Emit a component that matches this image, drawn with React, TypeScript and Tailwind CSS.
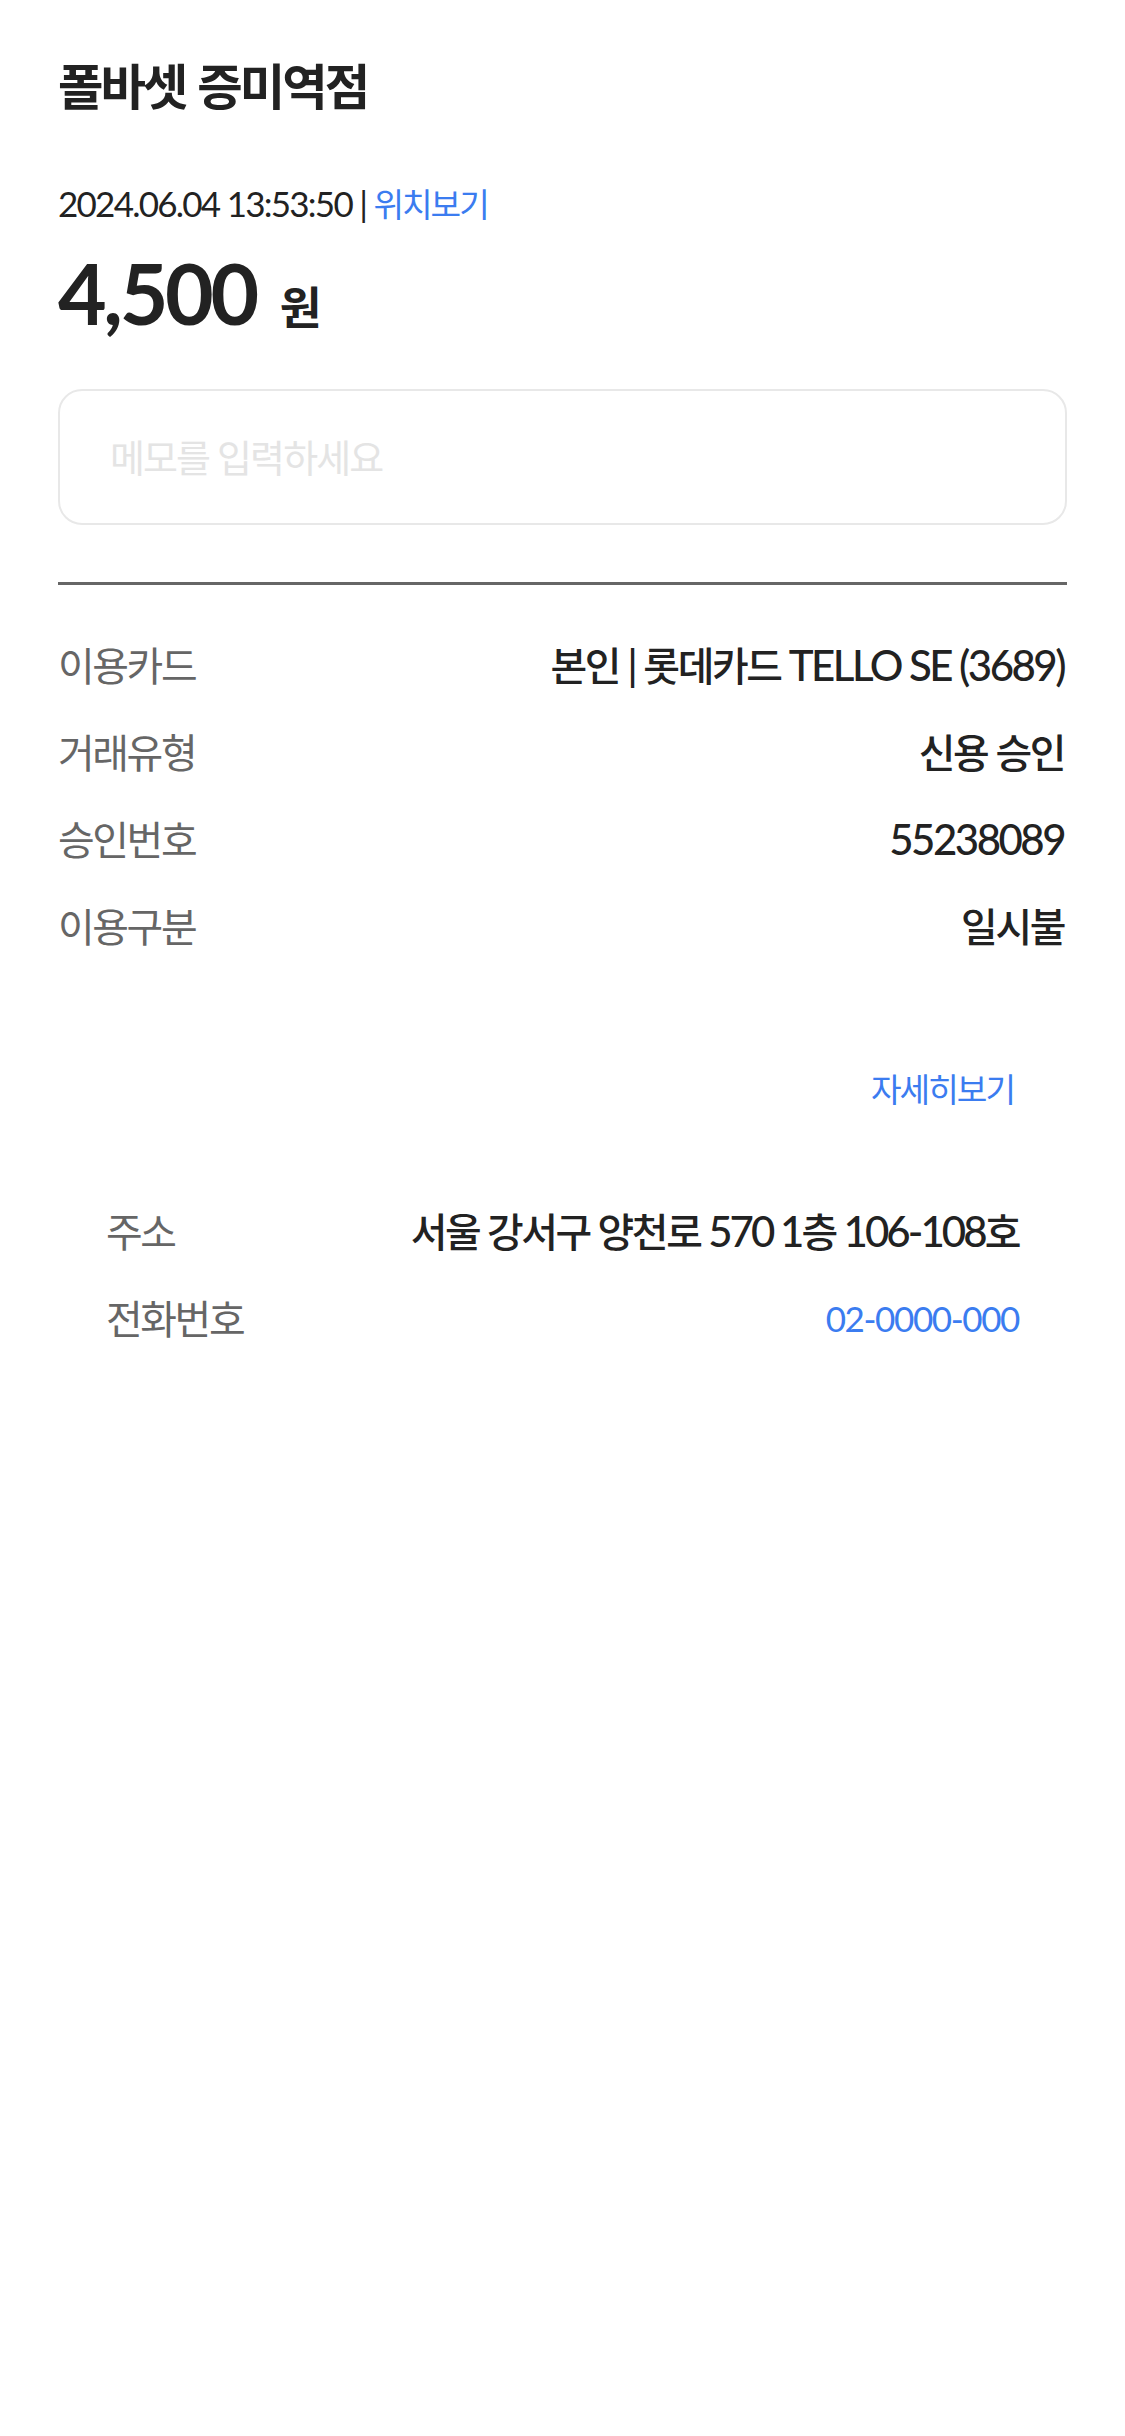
import React from 'react';

type Row = { label: string; value: string; link?: boolean };

const cardRows: Row[] = [
  { label: '이용카드', value: '본인 | 롯데카드 TELLO SE (3689)' },
  { label: '거래유형', value: '신용 승인' },
  { label: '승인번호', value: '55238089' },
  { label: '이용구분', value: '일시불' },
];

const storeRows: Row[] = [
  { label: '주소', value: '서울 강서구 양천로 570 1층 106-108호' },
  { label: '전화번호', value: '02-0000-000', link: true },
];

// Hangul glyphs of the fallback font are wider than the app's font, so tighten them a bit
const HANGUL = /([\u3131-\u318E\uAC00-\uD7A3]+)/;

function Ko({ text }: { text: string }) {
  return (
    <>
      {text.split(HANGUL).map((part, i) =>
        i % 2 === 1 ? (
          <span key={i} className="text-[0.95em] tracking-[-0.06em]">
            {part}
          </span>
        ) : (
          part
        )
      )}
    </>
  );
}

export default function App() {
  return (
    <div className="min-h-screen bg-white font-[Lato,'Noto_Sans_CJK_KR',sans-serif] tracking-[-0.05em] text-[#222]">
      <div className="px-[58px] pt-[55px]">
        <h1 className="text-[52px] font-bold leading-[60px]">
          <Ko text="폴바셋 증미역점" />
        </h1>

        <p className="mt-[62px] text-[35px] leading-[50px] tracking-[-0.05em]">
          2024.06.04 13:53:50 |{' '}
          <a className="text-[#3b7cf0]">
            <Ko text="위치보기" />
          </a>
        </p>

        <p className="mt-[14px] text-[84px] font-bold leading-[100px]">
          <span className="tracking-[-0.04em]">4,500</span>
          <span className="ml-[24px] text-[48px] leading-[60px]">
            <Ko text="원" />
          </span>
        </p>

        <div className="mt-[46px] flex h-[136px] items-center rounded-[24px] border-2 border-[#e8e8e8] px-[50px]">
          <input
            placeholder="메모를 입력하세요"
            className="w-full bg-transparent text-[38px] tracking-[-0.05em] outline-none placeholder:text-[#e4e4e4]"
          />
        </div>

        <div className="mt-[57px] h-[3px] bg-[#666]" />

        <dl className="mt-[37px]">
          {cardRows.map((row) => (
            <div key={row.label} className="flex h-[87px] items-center justify-between text-[42px]">
              <dt className="text-[#666]">
                <Ko text={row.label} />
              </dt>
              <dd className="pr-[3px] font-medium tracking-[-0.06em]">
                <Ko text={row.value} />
              </dd>
            </div>
          ))}
        </dl>

        <div className="mt-[93px] flex justify-end pr-[53px] text-[35px] leading-[50px] text-[#3b7cf0]">
          <button>
            <Ko text="자세히보기" />
          </button>
        </div>

        <dl className="mt-[74px] px-[48px]">
          {storeRows.map((row) => (
            <div key={row.label} className="flex h-[87px] items-center justify-between text-[42px]">
              <dt className="text-[#666]">
                <Ko text={row.label} />
              </dt>
              <dd
                className={
                  row.link
                    ? 'text-[35px] tracking-[-0.04em] text-[#3b7cf0]'
                    : 'font-medium tracking-[-0.07em]'
                }
              >
                <Ko text={row.value} />
              </dd>
            </div>
          ))}
        </dl>
      </div>
    </div>
  );
}
